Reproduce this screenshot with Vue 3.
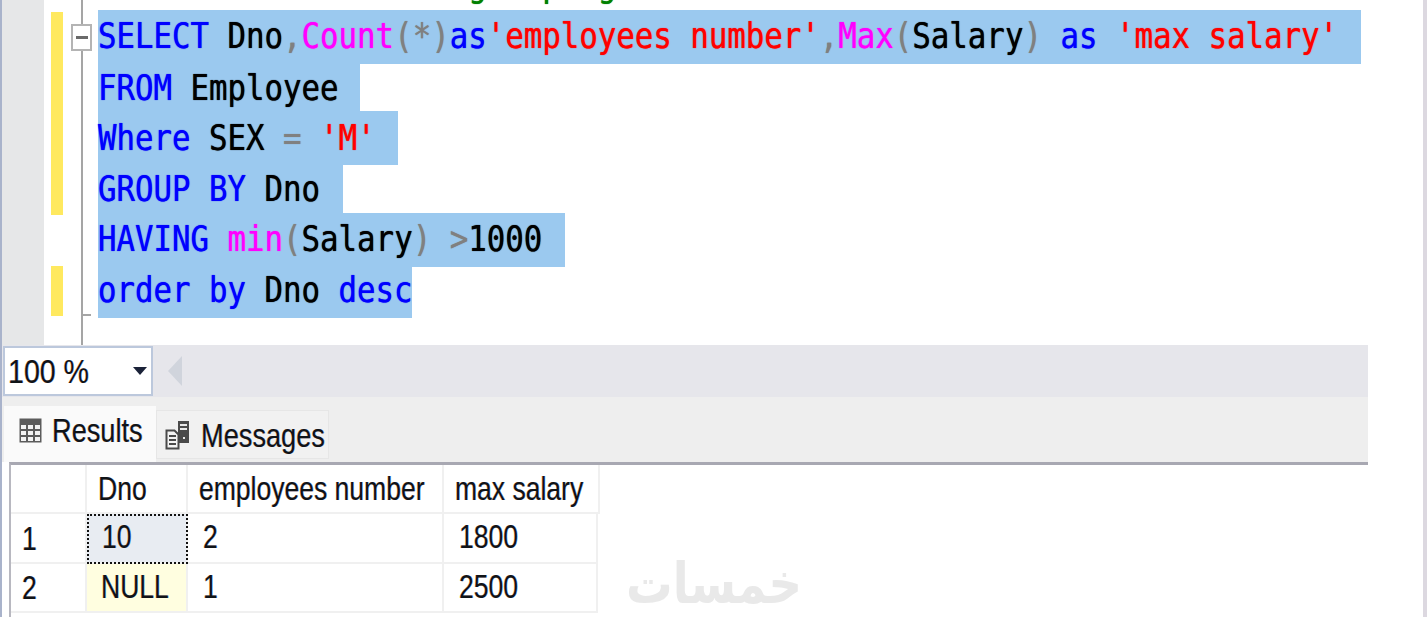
<script setup>
const comment = '--Select data after grouping'
const lines = [
  { h: 54, w: 1263, pad: 3, t: [['k','SELECT'],['i',' Dno'],['o',','],['f','Count'],['o','(*)'],['k','as'],['s',"'employees number'"],['o',','],['f','Max'],['o','('],['i','Salary'],['o',')'],['i',' '],['k','as'],['i',' '],['s',"'max salary'"]] },
  { h: 47, w: 262, pad: 0, t: [['k','FROM'],['i',' Employee']] },
  { h: 54, w: 300, pad: 1, t: [['k','Where'],['i',' SEX '],['o','='],['i',' '],['s',"'M'"]] },
  { h: 48, w: 245, pad: 0, t: [['k','GROUP BY'],['i',' Dno']] },
  { h: 54, w: 467, pad: 2, t: [['k','HAVING'],['i',' '],['f','min'],['o','('],['i','Salary'],['o',')'],['i',' '],['o','>'],['i','1000']] },
  { h: 51, w: 314, pad: 5, t: [['k','order by'],['i',' Dno '],['k','desc']] }
]
const rows = [
  { n: '1', cells: ['10', '2', '1800'], h: 50 },
  { n: '2', cells: ['NULL', '1', '2500'], h: 49 }
]
const cellClass = (r, c) => {
  if (r === 0 && c === 0) return 'focus'
  if (r === 1 && c === 0) return 'nullcell'
  return ''
}
</script>

<template>
  <div class="page">
    <section class="editor">
      <div class="gutter"></div>
      <div class="bars">
        <div class="bar first"></div>
        <div class="bar second"></div>
      </div>
      <div class="foldcol">
        <div class="foldline"></div>
        <div class="foldtick"></div>
        <div class="foldbox"><span></span></div>
      </div>
      <div class="code">
        <div class="clip"><span class="mono cm">{{ comment }}</span></div>
        <div
          v-for="(l, i) in lines"
          :key="i"
          class="line"
          :style="{ height: l.h + 'px', lineHeight: l.h - l.pad + 'px', width: l.w + 'px' }"
        >
          <span class="mono"><span v-for="(t, j) in l.t" :key="j" :class="t[0]">{{ t[1] }}</span></span>
        </div>
      </div>
    </section>

    <section class="zoombar">
      <div class="combo">
        <span class="sans squeeze zoomtext">100 %</span>
        <i class="caret"></i>
      </div>
      <i class="leftarrow"></i>
    </section>

    <section class="tabs">
      <div class="tab active">
        <svg class="ico-grid" width="23" height="25" viewBox="0 0 23 25">
          <rect x="0.5" y="0.5" width="22" height="24" fill="#5c5c5c"/>
          <g fill="#f4f4f4">
            <rect x="2" y="7" width="5" height="4"/><rect x="9" y="7" width="5" height="4"/><rect x="16" y="7" width="5" height="4"/>
            <rect x="2" y="13" width="5" height="4"/><rect x="9" y="13" width="5" height="4"/><rect x="16" y="13" width="5" height="4"/>
            <rect x="2" y="19" width="5" height="4"/><rect x="9" y="19" width="5" height="4"/><rect x="16" y="19" width="5" height="4"/>
          </g>
        </svg>
        <span class="sans squeeze tabtext">Results</span>
      </div>
      <div class="tab idle">
        <svg class="ico-msg" width="25" height="30" viewBox="0 0 25 30">
          <rect x="13" y="1" width="11" height="22" fill="#4a4a4a"/>
          <rect x="15" y="4" width="7" height="2" fill="#e8e8e8"/>
          <rect x="15" y="8" width="7" height="2" fill="#e8e8e8"/>
          <rect x="18" y="17" width="2" height="2" fill="#e8e8e8"/>
          <path d="M1.5 10.5h8l4 4v14h-12z" fill="#f4f4f4" stroke="#4a4a4a" stroke-width="2"/>
          <path d="M4 16h7M4 20h7M4 24h7" stroke="#4a4a4a" stroke-width="2"/>
        </svg>
        <span class="sans squeeze tabtext">Messages</span>
      </div>
    </section>

    <section class="results">
      <div class="gridrow head">
        <div class="cell num"></div>
        <div class="cell hd c1"><span class="sans squeeze">Dno</span></div>
        <div class="cell hd c2"><span class="sans squeeze">employees number</span></div>
        <div class="cell hd c3 wide"><span class="sans squeeze">max salary</span></div>
      </div>
      <div v-for="(r, ri) in rows" :key="r.n" class="gridrow" :style="{ height: r.h + 'px' }">
        <div class="cell num"><span class="sans squeeze">{{ r.n }}</span></div>
        <div
          v-for="(c, ci) in r.cells"
          :key="ci"
          class="cell body"
          :class="['c' + (ci + 1), cellClass(ri, ci)]"
        ><span class="sans squeeze">{{ c }}</span></div>
      </div>
    </section>

    <div class="mark" dir="rtl" lang="ar">خمسات</div>
  </div>
</template>

<style>
html, body { margin: 0; background: #fff; overflow: hidden; }
</style>

<style scoped>
.page {
  position: relative;
  width: 1427px;
  height: 617px;
  overflow: hidden;
  background: #fff;
  box-sizing: border-box;
  border-left: 2px solid #a9b3cb;
  border-right: 4px solid #dcd8e0;
}
.editor { display: flex; height: 345px; width: 1366px; }
.gutter { width: 42px; background: #e6e7e8; }
.bars { width: 19px; padding: 12px 0 0 7px; box-sizing: border-box; display: flex; flex-direction: column; gap: 51px; }
.bar { width: 12px; background: #ffe95f; }
.bar.first { height: 203px; }
.bar.second { height: 50px; }
.foldcol { position: relative; width: 35px; }
.foldline { position: absolute; left: 18px; top: 0; bottom: 0; width: 2px; background: #a5a5a5; }
.foldtick { position: absolute; left: 18px; top: 314px; width: 10px; height: 2px; background: #a5a5a5; }
.foldbox {
  position: absolute; left: 8px; top: 24px; width: 21px; height: 27px;
  box-sizing: border-box; border: 2px solid #b4b4b4; background: #fff;
  display: flex; align-items: center; justify-content: center;
}
.foldbox span { width: 12px; height: 3px; background: #6a6a6a; }
.code { flex: 1; min-width: 0; }
.clip { height: 10px; display: flex; align-items: flex-end; overflow: hidden; line-height: 51px; }
.cm { color: #008000; }
.line { background: #9bc9ef; white-space: pre; }
.mono {
  display: inline-block;
  font-family: "DejaVu Sans Mono", monospace;
  font-size: 35.6px;
  white-space: pre;
  transform: scaleX(.864);
  transform-origin: left center;
  text-shadow: 0 0 1px currentColor;
}
.k { color: #0000ff; }
.f { color: #ff00ff; }
.s { color: #ff0000; }
.o { color: #808080; }
.i { color: #000; }

.sans {
  font-family: "Liberation Sans", Arial, sans-serif;
  font-size: 34px;
  color: #101418;
  white-space: nowrap;
  text-shadow: -0.6px 0 rgba(255, 130, 0, .45), 0.6px 0 rgba(0, 110, 255, .45);
}
.squeeze { display: inline-block; transform: scaleX(.78); transform-origin: left center; }
.zoomtext { transform: scaleX(.84); }
.tabtext { transform: scaleX(.8); }

.zoombar {
  height: 52px; width: 1366px; background: #e6e6eb;
  display: flex; align-items: center; box-sizing: border-box;
}
.combo {
  width: 150px; height: 50px; margin-left: 1px; box-sizing: border-box;
  border: 2px solid #bcc8dc; background: #fff;
  display: flex; align-items: center; justify-content: space-between;
  padding: 0 4px 0 3px;
}
.caret { width: 0; height: 0; border-left: 7px solid transparent; border-right: 7px solid transparent; border-top: 8px solid #1a2238; }
.leftarrow {
  margin-left: 15px; width: 0; height: 0;
  border-top: 15px solid transparent; border-bottom: 15px solid transparent; border-right: 14px solid #d0d4dc;
}

.tabs {
  height: 65px; width: 1366px; background: #eeeeee;
  display: flex; align-items: flex-start; padding: 9px 0 0 2px; box-sizing: border-box;
}
.tab { display: flex; align-items: center; box-sizing: border-box; }
.tab.active { width: 152px; height: 56px; background: #fafafa; padding: 0 0 8px 15px; gap: 10px; }
.tab.idle { width: 173px; height: 49px; margin-top: 4px; background: #f1f1f1; border: 1px solid #e6e6e6; padding: 1px 0 0 8px; gap: 11px; }
.tabtext { width: 91px; }
.ico-msg, .ico-grid { flex: none; }

.results {
  width: 1359px; height: 155px; margin-left: 7px; box-sizing: border-box;
  border-top: 3px solid #a8a8b2; border-left: 2px solid #b8b8c0;
}
.gridrow { display: flex; }
.gridrow.head { height: 49px; }
.cell {
  box-sizing: border-box; height: 100%;
  display: flex; align-items: center;
  border-right: 2px solid #f0f0f0; border-bottom: 2px solid #f0f0f0;
  padding-left: 15px;
}
.body { padding-bottom: 3px; }
.num { width: 76px; padding-left: 11px; }
.c1 { width: 101px; }
.c2 { width: 256px; }
.c3 { width: 154px; }
.wide { width: 156px; }
.hd { padding-left: 11px; }
.focus { background: #e8ecf2; outline: 2px dotted #111; outline-offset: -2px; }
.nullcell { background: #fffee0; padding-left: 14px; }

.mark {
  position: absolute; left: 624px; top: 552px;
  font-family: "DejaVu Sans", sans-serif; font-size: 56px; line-height: 64px; font-weight: 700;
  color: #e9e9e9;
  transform: scaleX(.83); transform-origin: left top;
  white-space: nowrap;
}
</style>
